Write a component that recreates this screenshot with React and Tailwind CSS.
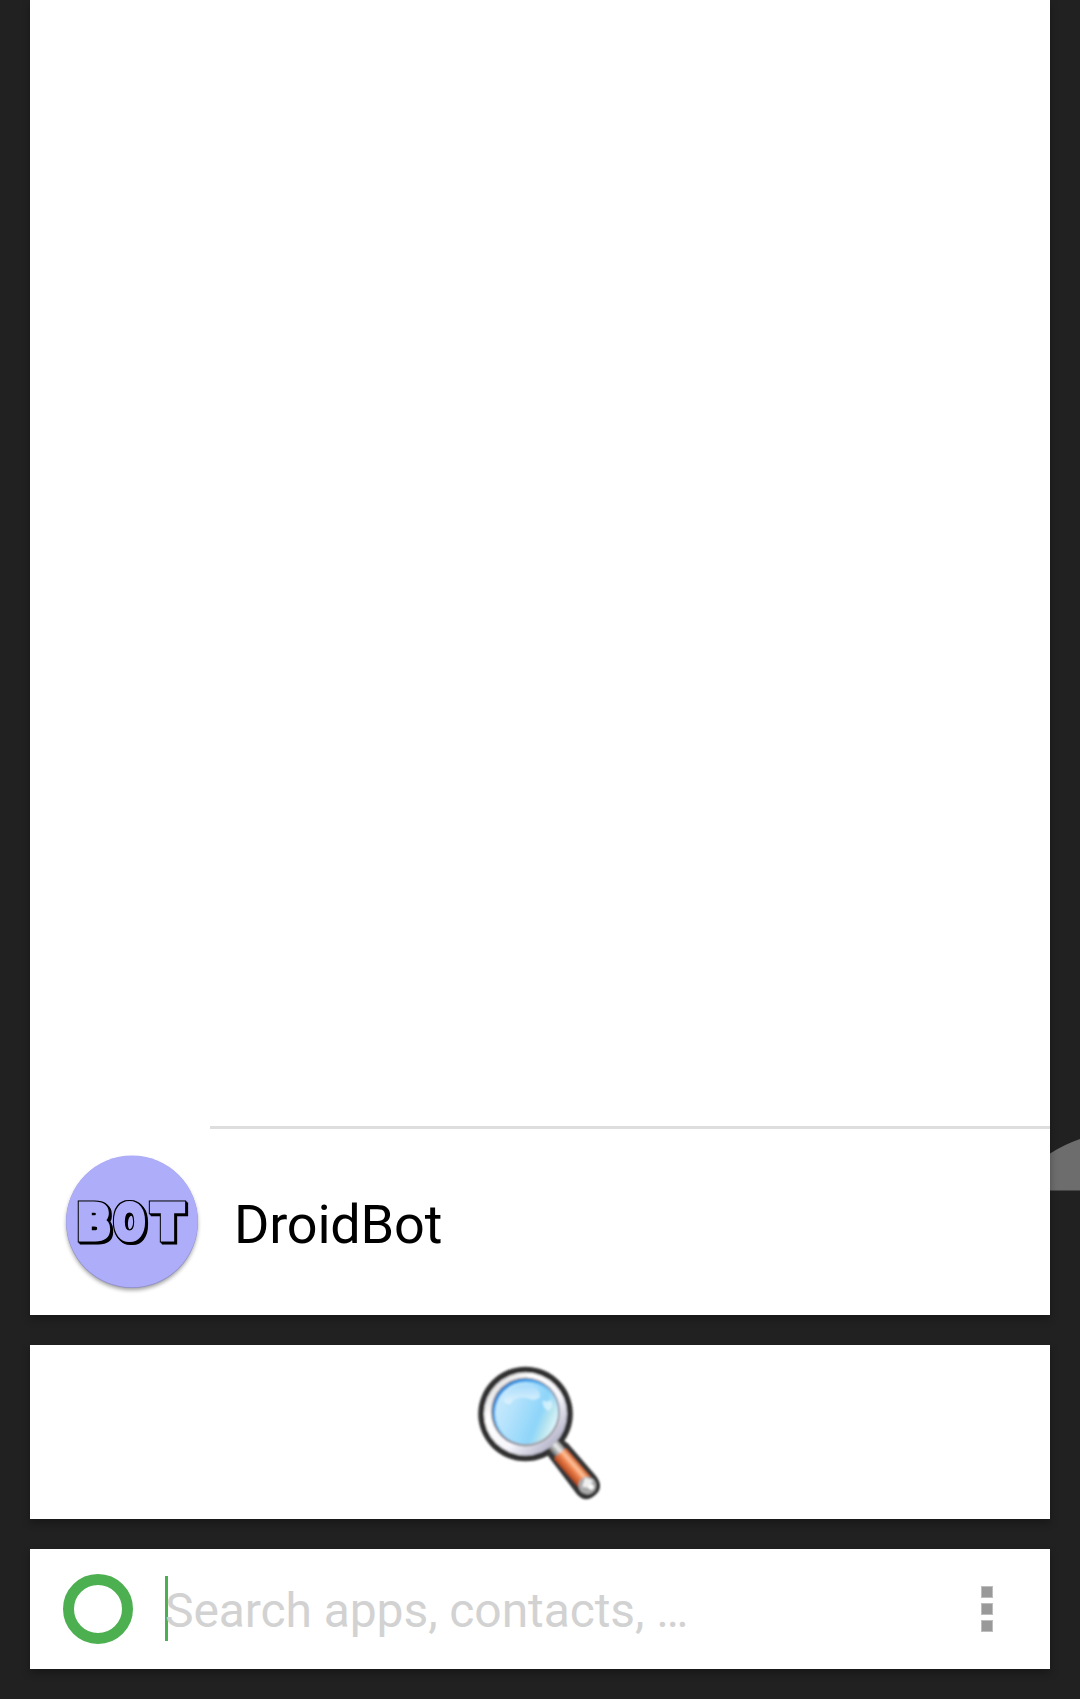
const letters = [
  { char: 'B', x: 17, width: 34, join: 'miter' },
  { char: 'O', x: 54, width: 31, join: 'bevel' },
  { char: 'T', x: 92, width: 31, join: 'miter' },
];

function BotIcon() {
  return (
    <svg width="144" height="150" viewBox="0 0 144 150" className="shrink-0 [font-family:'DejaVu_Sans',sans-serif] text-[48px] font-bold">
      <defs>
        <filter id="botShadow" x="-10%" y="-10%" width="120%" height="120%">
          <feGaussianBlur stdDeviation="2" />
        </filter>
        <filter id="outline" x="-20%" y="-20%" width="140%" height="140%" colorInterpolationFilters="sRGB">
          <feMorphology in="SourceAlpha" operator="dilate" radius="1" result="edge" />
          <feOffset in="edge" dx="1" dy="1" result="depth1" />
          <feOffset in="edge" dx="2" dy="1.5" result="depth2" />
          <feMerge>
            <feMergeNode in="depth2" />
            <feMergeNode in="depth1" />
            <feMergeNode in="edge" />
            <feMergeNode in="SourceGraphic" />
          </feMerge>
        </filter>
      </defs>
      <circle cx="72" cy="73.5" r="65.5" fill="#000" opacity="0.4" filter="url(#botShadow)" />
      <circle cx="72" cy="71" r="66" fill="#8e8ecb" />
      <circle cx="72" cy="70.4" r="65.8" fill="#adadf9" />
      <g filter="url(#outline)">
        {letters.map((l) => (
          <text
            key={l.char}
            x={l.x}
            y="87.5"
            textLength={l.width}
            lengthAdjust="spacingAndGlyphs"
            fill="#adadf9"
            stroke="#adadf9"
            strokeWidth="5"
            strokeLinejoin={l.join}
            strokeMiterlimit="2"
          >
            {l.char}
          </text>
        ))}
      </g>
    </svg>
  );
}

function Magnifier() {
  return (
    <svg width="160" height="160" viewBox="0 0 160 160">
      <defs>
        <linearGradient id="rim" x1="0" y1="0" x2="1" y2="1">
          <stop offset="0" stopColor="#c8c6ca" />
          <stop offset="0.3" stopColor="#fff" />
          <stop offset="0.6" stopColor="#f6f6fc" />
          <stop offset="0.8" stopColor="#c3c3d5" />
          <stop offset="1" stopColor="#9090a5" />
        </linearGradient>
        <linearGradient id="inner" x1="0" y1="0" x2="1" y2="1">
          <stop offset="0" stopColor="#746f75" />
          <stop offset="0.6" stopColor="#8c8b96" />
          <stop offset="1" stopColor="#aaa" />
        </linearGradient>
        <linearGradient id="glass" x1="0" y1="0.3" x2="1" y2="0.7">
          <stop offset="0" stopColor="#c9eafd" />
          <stop offset="0.3" stopColor="#b3e2fc" />
          <stop offset="0.7" stopColor="#8dd5f9" />
          <stop offset="0.85" stopColor="#b9e5ef" />
          <stop offset="1" stopColor="#e5f9ff" />
        </linearGradient>
        <linearGradient id="blueEdge" x1="0" y1="0" x2="0.8" y2="0.8">
          <stop offset="0" stopColor="#1c78d0" />
          <stop offset="0.4" stopColor="#49aaf0" />
          <stop offset="1" stopColor="#d5f0fb" />
        </linearGradient>
        <linearGradient id="shine" x1="0" y1="0" x2="0" y2="1">
          <stop offset="0" stopColor="#a9dcfb" />
          <stop offset="1" stopColor="#dff3fe" />
        </linearGradient>
        <linearGradient id="grip" x1="0" y1="0" x2="0" y2="1">
          <stop offset="0" stopColor="#d8662f" />
          <stop offset="0.3" stopColor="#ffc49d" />
          <stop offset="0.55" stopColor="#ee8450" />
          <stop offset="1" stopColor="#b4481d" />
        </linearGradient>
        <linearGradient id="metal" x1="0" y1="0" x2="0" y2="1">
          <stop offset="0" stopColor="#999" />
          <stop offset="0.4" stopColor="#f0f0f0" />
          <stop offset="1" stopColor="#666" />
        </linearGradient>
        <filter id="soft"><feGaussianBlur stdDeviation="0.9" /></filter>
      </defs>
      <g filter="url(#soft)">
        <circle cx="65.5" cy="64" r="47.3" fill="#323232" />
        <g transform="translate(92 94) rotate(49.2)">
          <path d="M-4 -9 L10 -12.5 H52 Q67 -12 67 1 Q67 14 54 14 L8 11 L-4 9Z" fill="#343434" />
          <rect x="-2" y="-6.5" width="15" height="12" fill="url(#metal)" />
          <rect x="12" y="-7.5" width="39" height="15.5" rx="1.5" fill="url(#grip)" />
          <circle cx="54.5" cy="0.5" r="8.8" fill="#aaa" />
          <path d="M47 -3 L54 -7 L58 0 L52 5Z" fill="#eee" />
          <circle cx="58" cy="-1.5" r="2.6" fill="#fff" />
        </g>
        <circle cx="65.5" cy="64" r="41.5" fill="url(#rim)" />
        <circle cx="65.5" cy="62" r="34.5" fill="url(#inner)" />
        <circle cx="65.5" cy="61.5" r="32.8" fill="url(#blueEdge)" />
        <circle cx="66" cy="63" r="31" fill="url(#glass)" />
        <path d="M43 50 Q48 35 64 35 Q80 35 80 47 Q75 52 67 48 Q55 46 50 54 Q45 54 43 50Z" fill="url(#shine)" />
        <path d="M83 50 Q87 53 91 50 Q94 58 88 61 Q81 56 83 50Z" fill="#e9faff" opacity=".65" />
      </g>
    </svg>
  );
}

export default function App() {
  return (
    <div className="relative flex h-[1699px] w-[1080px] flex-col overflow-hidden bg-[#212121] px-[30px] pb-[30px] [font-family:Roboto,sans-serif]">
      <svg width="60" height="70" viewBox="0 0 60 70" className="absolute top-[1130px] right-0">
        <path d="M0 42 L30 23.5 Q44 14.5 60 9 V60.5 H0Z" fill="#6d6d6d" />
      </svg>

      <section className="relative flex h-[1315px] shrink-0 flex-col justify-end bg-white shadow-[0_4px_8px_rgba(0,0,0,0.3)]">
        <div className="ml-[180px] h-[3px] bg-[#dedede]" />
        <div className="flex h-[186px] items-start pl-[30px]">
          <div className="pt-[22px]">
            <BotIcon />
          </div>
          <span className="mt-16 ml-[30px] text-[54px] leading-[63px] tracking-[-0.2px] text-black">DroidBot</span>
        </div>
      </section>

      <section className="relative mt-[30px] flex h-[174px] shrink-0 justify-center bg-white pt-[5px] shadow-[0_4px_8px_rgba(0,0,0,0.3)]">
        <Magnifier />
      </section>

      <section className="relative mt-[30px] flex h-[120px] shrink-0 items-center bg-white pl-[33px] shadow-[0_4px_8px_rgba(0,0,0,0.3)]">
        <div className="size-[70px] rounded-full border-[11px] border-[#4caf50]" />
        <div className="mb-[2px] ml-8 h-[65px] w-[3px] bg-[#4caf50]" />
        <span className="mt-1 -ml-[3px] text-[48px] leading-[56px] tracking-[-0.09px] text-[#d2d2d2]">Search apps, contacts, …</span>
        <div className="mr-[57px] ml-auto flex flex-col gap-[5px]">
          <i className="size-3 border border-[#bebebe] bg-[#999]" />
          <i className="size-3 border border-[#bebebe] bg-[#999]" />
          <i className="size-3 border border-[#bebebe] bg-[#999]" />
        </div>
      </section>
    </div>
  );
}
